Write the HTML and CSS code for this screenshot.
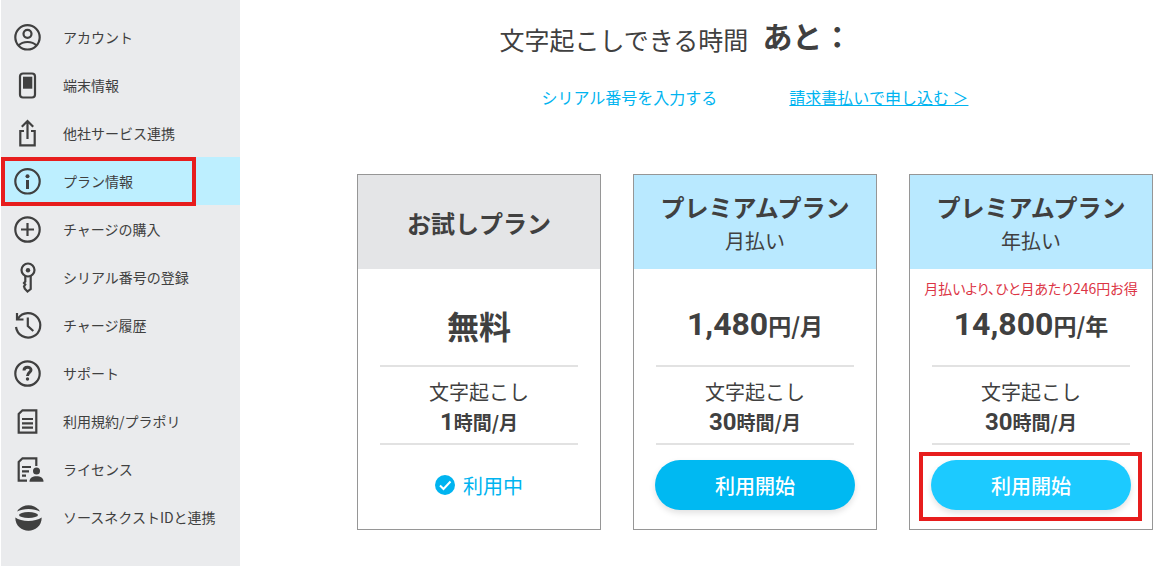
FILE: index.html
```html
<!DOCTYPE html>
<html lang="ja">
<head>
<meta charset="UTF-8">
<meta name="viewport" content="width=device-width, initial-scale=1">
<title>プラン情報</title>
<link rel="stylesheet" href="styles.css">
</head>
<body>
<nav class="sidebar">
<ul>
<li>
<a href="#account">
<svg class="icon" viewBox="0 0 32 32"><circle cx="15.5" cy="16.3" r="12.2"/><circle cx="15.5" cy="12.8" r="4"/><path d="M6.5 24.5c2.5-2.6 5.5-3.5 9-3.5s6.5.9 9 3.5"/></svg>
<span>アカウント</span>
</a>
</li>
<li>
<a href="#device">
<svg class="icon" viewBox="0 0 32 32"><rect x="8" y="4.5" width="15" height="24" rx="3"/><path class="solid" d="M11 7.7h9.3v12H11z"/></svg>
<span>端末情報</span>
</a>
</li>
<li>
<a href="#services">
<svg class="icon" viewBox="0 0 32 32"><path d="M12 14H8.3v14.3h14.4V14H19M15.5 22V4M9.8 9.8L15.5 4l5.7 5.8"/></svg>
<span>他社サービス連携</span>
</a>
</li>
<li class="current">
<a href="#plan" aria-current="page">
<svg class="icon" viewBox="0 0 32 32"><circle cx="15.5" cy="16.3" r="12.2"/><circle class="solid" cx="15.5" cy="11.3" r="2"/><path class="thick" d="M15.5 15v9"/></svg>
<span>プラン情報</span>
</a>
</li>
<li>
<a href="#charge">
<svg class="icon" viewBox="0 0 32 32"><circle cx="15.5" cy="16.5" r="12.2"/><path d="M15.5 10v13M9 16.5h13"/></svg>
<span>チャージの購入</span>
</a>
</li>
<li>
<a href="#serial">
<svg class="icon" viewBox="0 0 32 32"><circle cx="16" cy="9" r="6.5"/><circle class="solid" cx="16" cy="9.3" r="2.2"/><path d="M13.3 15v5.5L12 22l1.3 1.5-1.3 2 .8 2.2 2.7 2.8 3.2-2.500V15"/></svg>
<span>シリアル番号の登録</span>
</a>
</li>
<li>
<a href="#history">
<svg class="icon" viewBox="0 0 32 32"><path d="M4 18A12.2 12.2 0 1 0 6 9.500M5 4v6.500h6.500M15.800 8.500V17l5.500 5"/></svg>
<span>チャージ履歴</span>
</a>
</li>
<li>
<a href="#support">
<svg class="icon" viewBox="0 0 32 32"><circle cx="15.5" cy="16.5" r="12.2"/><path class="thick" d="M12 13.5c0-4.500 7-4.300 7-.5 0 2.500-3.500 2.500-3.500 6"/><circle class="solid" cx="15.5" cy="22" r="1.7"/></svg>
<span>サポート</span>
</a>
</li>
<li>
<a href="#terms">
<svg class="icon" viewBox="0 0 32 32"><path d="M10.5 5.300h13.800v22.400H6.700V9zM10 14h11M10 18.300h11M10 22.700h11"/></svg>
<span>利用規約/プラポリ</span>
</a>
</li>
<li>
<a href="#license">
<svg class="icon" viewBox="0 0 32 32"><path d="M24.3 13V5.300H10.500L6.700 9v18.700H15M10 14h9M10 18.300h7M10 22.700h4"/><circle class="solid" cx="24.5" cy="18" r="3.5"/><path class="solid" d="M17.5 28.700c0-4 3-5.500 7-5.500s7 1.500 7 5.500z"/></svg>
<span>ライセンス</span>
</a>
</li>
<li>
<a href="#sourcenext">
<svg class="icon" viewBox="0 0 32 32"><path class="solid" d="M5 10.500c5-8.500 18-8.500 23 0-6-3.500-17-3.500-23 0z"/><ellipse class="solid" cx="16.5" cy="14" rx="9.500" ry="3"/><path class="solid" d="M3.300 16.500c6 4.500 20 4.500 26.400 0 0 17.500-26.400 17.500-26.400 0z"/></svg>
<span>ソースネクストIDと連携</span>
</a>
</li>
</ul>
</nav>

<main class="content">
<h1 class="remaining">文字起こしできる時間<b>あと：</b></h1>

<div class="links">
<a class="serial" href="#serial">シリアル番号を入力する</a>
<a href="#invoice">請求書払いで申し込む ＞</a>
</div>

<div class="plans">
<section class="plan trial">
<header>
<h2>お試しプラン</h2>
</header>
<div class="body">
<p class="note"></p>
<p class="price free">無料</p>
<p class="quota">文字起こし<br><b><span class="num">1</span>時間/月</b></p>
<p class="status">
<svg viewBox="0 0 20 20"><circle cx="10" cy="10" r="10"/><path d="M5 10.500l3.500 3.500 7-7.500"/></svg>
利用中
</p>
</div>
</section>

<section class="plan">
<header>
<h2>プレミアムプラン</h2>
<p>月払い</p>
</header>
<div class="body">
<p class="note"></p>
<p class="price"><span class="num">1,480</span>円/月</p>
<p class="quota">文字起こし<br><b><span class="num">30</span>時間/月</b></p>
<div class="action">
<button type="button">利用開始</button>
</div>
</div>
</section>

<section class="plan">
<header>
<h2>プレミアムプラン</h2>
<p>年払い</p>
</header>
<div class="body">
<p class="note">月払いより、ひと月あたり246円お得</p>
<p class="price"><span class="num">14,800</span>円/年</p>
<p class="quota">文字起こし<br><b><span class="num">30</span>時間/月</b></p>
<div class="action marked">
<button type="button">利用開始</button>
</div>
</div>
</section>
</div>
</main>
</body>
</html>
```

FILE: styles.css
```css
:root {
    --text: #404040;
    --accent: #00b4f0;
    --mark: #e71d1d;
    --line: #e2e2e2;
}

* {
    box-sizing: border-box;
    margin: 0;
    padding: 0;
}

body {
    display: flex;
    min-height: 100vh;
    padding-left: 1px;
    background: #fff;
    color: var(--text);
    font-family: "Noto Sans CJK JP", sans-serif;
    font-size: 14px;
}

/* Sidebar */

.sidebar {
    flex: 0 0 239px;
    padding: 13px 0;
    background: #eaebed;
}

.sidebar ul {
    list-style: none;
}

.sidebar a {
    display: flex;
    align-items: center;
    gap: 19px;
    height: 48px;
    padding-left: 11px;
    color: inherit;
    line-height: 20px;
    text-decoration: none;
}

.icon {
    width: 32px;
    height: 32px;
    fill: none;
    stroke: var(--text);
    stroke-width: 2.2;
}

.icon .solid {
    fill: var(--text);
    stroke: none;
}

.icon .thick {
    stroke-width: 3;
}

.sidebar .current {
    position: relative;
    background: #bdefff;
}

/* Red frames that point at the two places to click */

.sidebar .current::after, .marked::after {
    content: '';
    position: absolute;
    border: 4px solid var(--mark);
    pointer-events: none;
}

.sidebar .current::after {
    inset: 0 44px -1px 0;
}

.marked::after {
    inset: -8px -11px -11px -12px;
}

/* Main column */

.content {
    flex: 1;
    padding: 15px 22px 36px 117px;
}

.remaining {
    display: flex;
    justify-content: center;
    align-items: flex-start;
    gap: 14px;
    padding-right: 158px;
    font-size: 25px;
    font-weight: 400;
    line-height: 48px;
}

.remaining b {
    font-size: 30px;
    line-height: 40px;
}

.links {
    display: flex;
    justify-content: center;
    gap: 72px;
    margin: 22px 0 65px;
    font-size: 16px;
    line-height: 24px;
}

.links a {
    color: var(--accent);
}

.links .serial {
    text-decoration: none;
}

/* Plan cards */

.plans {
    display: grid;
    grid-template-columns: repeat(3, 1fr);
    gap: 32px;
}

.plan {
    border: 1px solid #969696;
    text-align: center;
}

.plan header {
    display: flex;
    flex-direction: column;
    justify-content: center;
    height: 94px;
    padding-top: 2px;
    background: #b9e9ff;
    font-size: 20px;
    line-height: 32px;
}

.trial header {
    background: #e4e5e7;
}

.plan h2 {
    font-size: 24px;
    line-height: 36px;
}

.body {
    display: flex;
    flex-direction: column;
    align-items: center;
    padding-bottom: 19px;
}

.num {
    font-family: Roboto, sans-serif;
    line-height: 1;
}

.note {
    height: 20px;
    margin-top: 9px;
    color: #dc3545;
    font-feature-settings: "palt";
    line-height: 20px;
    white-space: nowrap;
}

.price {
    margin: 3px 0 16px;
    font-size: 23px;
    font-weight: 700;
    line-height: 48px;
}

.price .num {
    font-size: 32px;
}

.price.free {
    font-size: 32px;
}

.quota {
    width: 198px;
    padding: 10px 0 6px;
    border-top: 2px solid var(--line);
    border-bottom: 2px solid var(--line);
    font-size: 20px;
    line-height: 30px;
}

.quota b {
    font-size: 19px;
}

.quota .num {
    font-size: 24px;
}

.status {
    display: flex;
    align-items: center;
    gap: 8px;
    height: 50px;
    margin-top: 15px;
    color: var(--accent);
    font-size: 20px;
}

.status svg {
    width: 20px;
    height: 20px;
    fill: var(--accent);
}

.status path {
    fill: none;
    stroke: #fff;
    stroke-width: 2;
}

.action {
    position: relative;
    margin-top: 15px;
}

.action button {
    width: 200px;
    height: 50px;
    border: 0;
    border-radius: 25px;
    background: #00b9f2;
    box-shadow: 0 3px 6px rgba(0, 0, 0, 0.12);
    color: #fff;
    font: 500 20px "Noto Sans CJK JP", sans-serif;
    cursor: pointer;
}

.action button:hover, .marked button {
    background: #1ccaff;
}
```
